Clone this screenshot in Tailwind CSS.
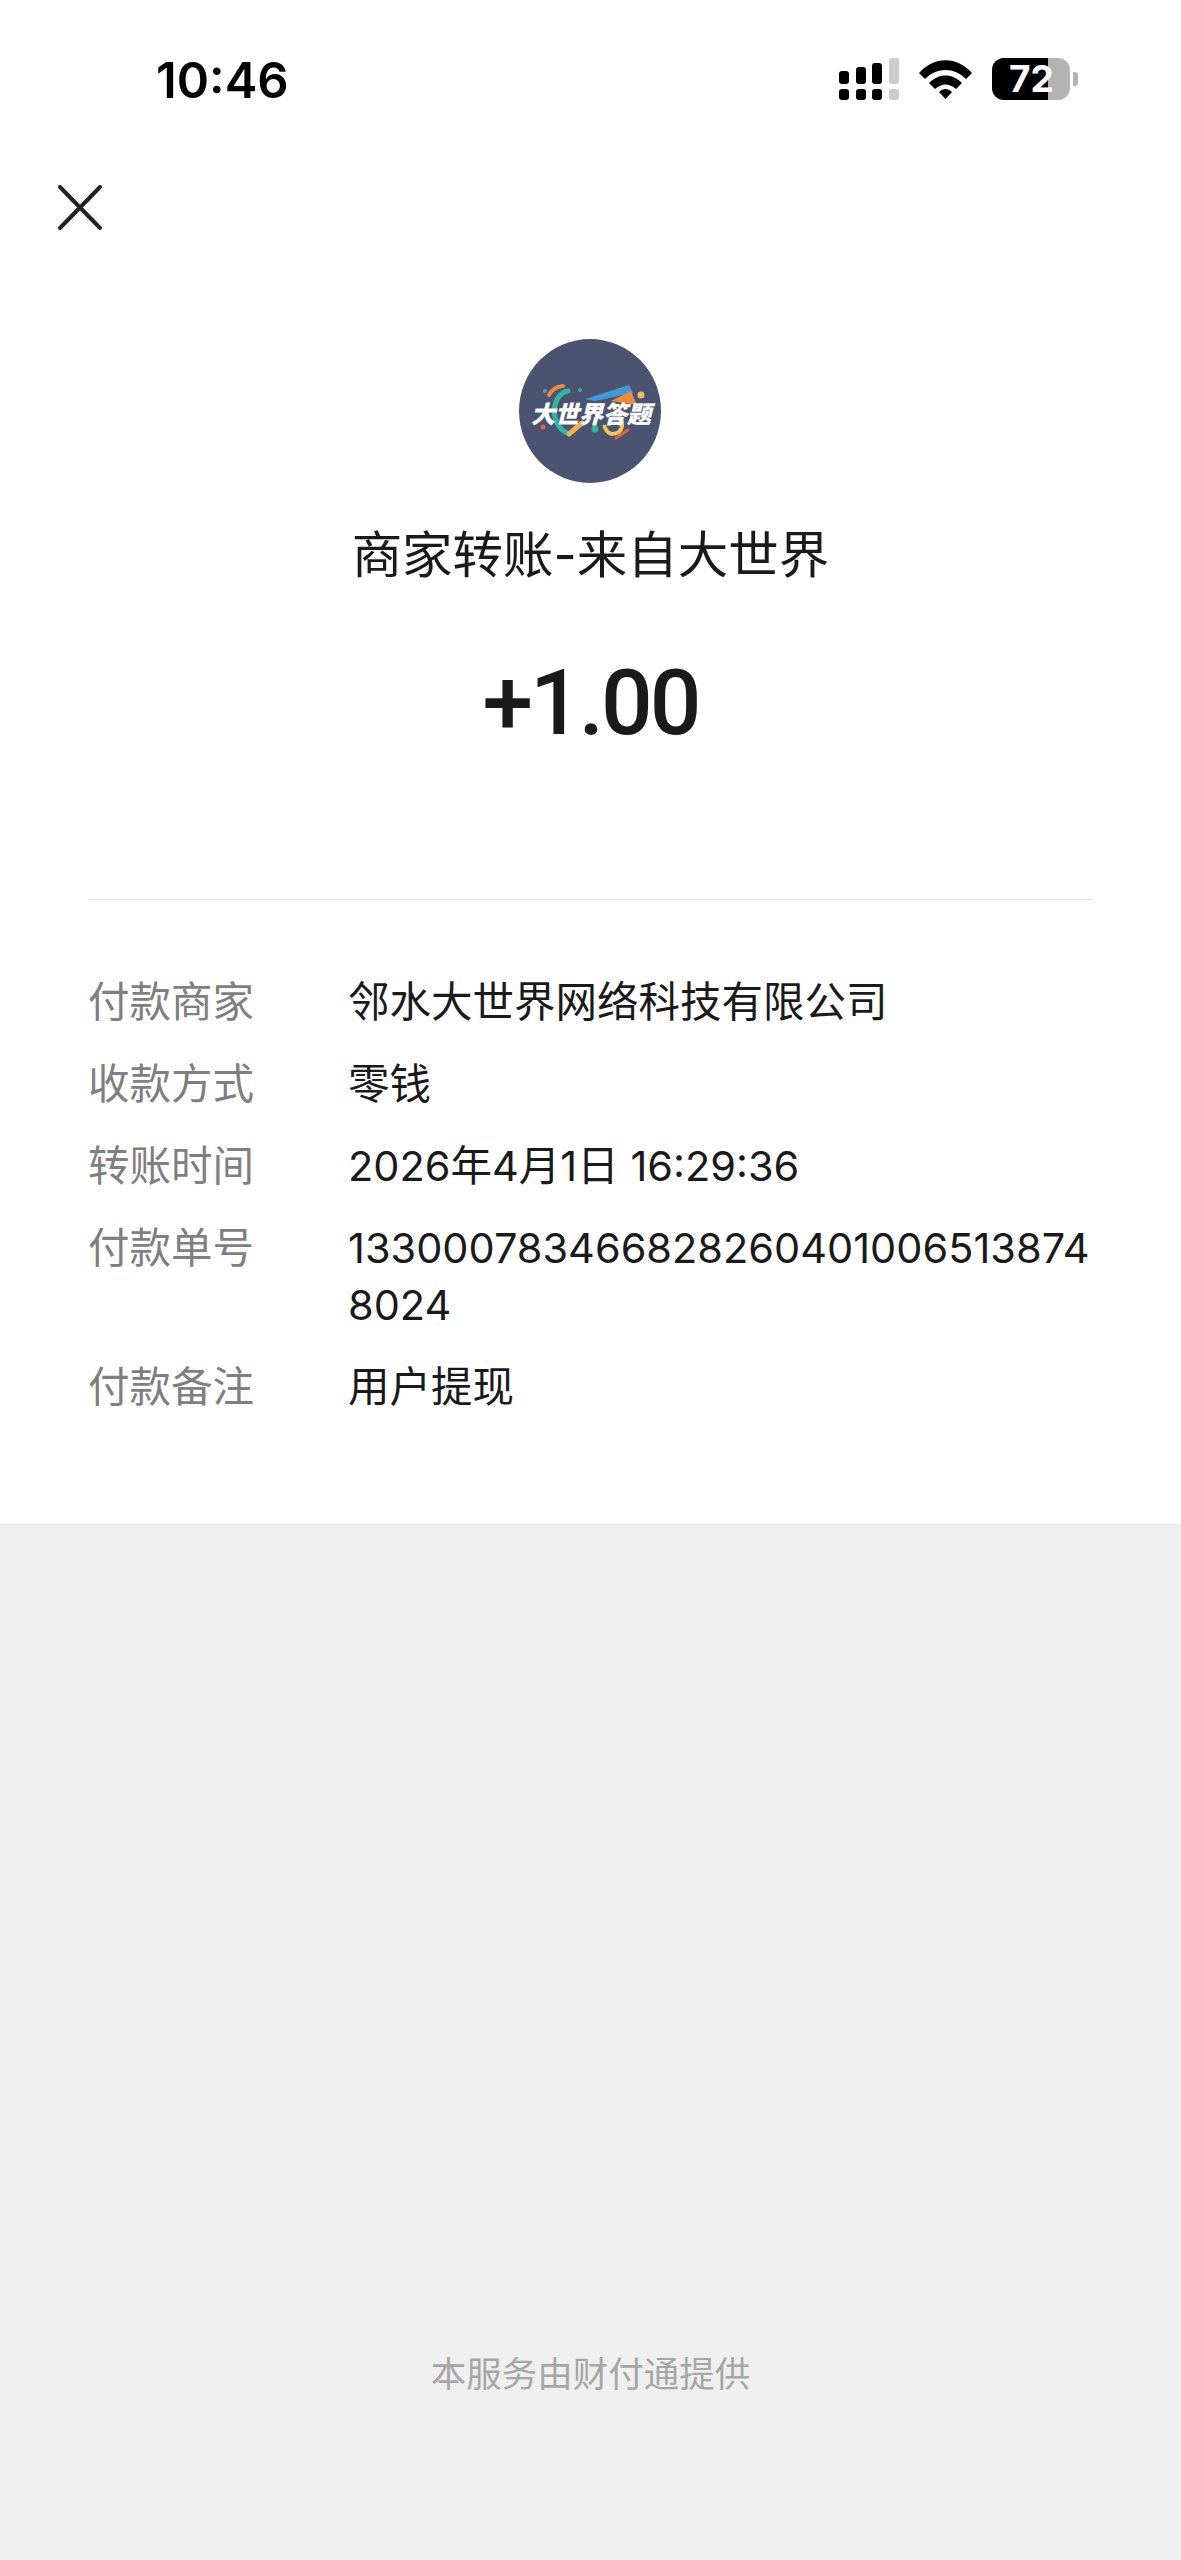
<!DOCTYPE html>
<html lang="zh-CN">

<head>
  <meta charset="UTF-8" />
  <meta name="viewport" content="width=device-width, initial-scale=1" />
  <title>商家转账</title>
  <script src="https://cdn.jsdelivr.net/npm/@tailwindcss/browser@4"></script>
</head>

<body class="bg-[#efefef] font-['Inter','Noto_Sans_CJK_SC',sans-serif] text-[#1a1a1a] w-[1181px] h-[2560px] flex flex-col overflow-hidden">

  <div class="bg-white h-[1525px] shrink-0 border-b border-[#e6e6e6]">
    <!-- status bar -->
    <div class="h-[160px] flex items-start justify-between pl-[156px] pr-[103px] pt-[51px]">
      <span class="text-[49px] leading-[60px] font-semibold text-black">10:46</span>
      <div class="flex items-center gap-[20px] pt-[7px]">
        <svg width="60" height="42" viewBox="0 0 60 42">
          <rect x="0" y="13" width="10" height="13" rx="3" />
          <rect x="17" y="9" width="10" height="17" rx="3" />
          <rect x="33" y="5" width="10" height="21" rx="3" />
          <rect x="50" y="0" width="10" height="26" rx="3" fill="#cccccc" />
          <rect x="0" y="31" width="10" height="11" rx="3" />
          <rect x="17" y="31" width="10" height="11" rx="3" />
          <rect x="33" y="31" width="10" height="11" rx="3" />
          <rect x="50" y="31" width="10" height="11" rx="3" fill="#cccccc" />
        </svg>
        <svg width="53" height="40" viewBox="0 0 53 40">
          <path d="M0 14 C15 -3 38 -3 53 14 L47 20 C35 8 18 8 6 20 Z" />
          <path d="M10 24 C20 14 33 14 43 24 L37 30 C30 24 23 24 16 30 Z" />
          <path d="M20 33 C24 29 29 29 33 33 L26.5 40 Z" />
        </svg>
        <div class="flex items-center gap-[3px]">
          <div class="relative w-[78px] h-[42px] rounded-[12px] bg-[#b3b3b3]">
            <div class="h-full w-[56px] bg-black rounded-l-[12px]"></div>
            <span class="absolute left-[17px] top-[2px] text-[37px] leading-[38px] font-bold text-white">72</span>
          </div>
          <div class="w-[5px] h-[14px] rounded-r-[4px] bg-[#b3b3b3]"></div>
        </div>
      </div>
    </div>

    <!-- close -->
    <div class="h-[179px] pl-[58px] pt-[25px]">
      <svg width="44" height="45" viewBox="0 0 44 45" fill="none" stroke="#222222" stroke-width="4" stroke-linecap="round">
        <path d="M2 2 L42 43 M42 2 L2 43" />
      </svg>
    </div>

    <!-- logo -->
    <div class="flex justify-center pr-px">
      <svg width="142" height="144" viewBox="0 0 142 144" class="block">
        <ellipse cx="71" cy="72" rx="71" ry="72" fill="#4a5470" />
        <path d="M66 60 L110 46 L114 54 L76 62 Z" fill="#3f9bd8" />
        <path d="M92 62 L112 52 L118 66 Z" fill="#ee8a3c" />
        <path d="M49 52 C32 55 30 86 48 94" fill="none" stroke="#2fb7a0" stroke-width="5" stroke-linecap="round" />
        <path d="M30 56 Q34 48 44 47" fill="none" stroke="#ee8a3c" stroke-width="4" stroke-linecap="round" />
        <path d="M50 95 L63 84" fill="none" stroke="#e9b54a" stroke-width="5" stroke-linecap="round" />
        <path d="M85 86 Q89 99 100 93 Q104 89 103 82" fill="none" stroke="#eec35a" stroke-width="4" />
        <path d="M97 99 L109 91" fill="none" stroke="#e8603c" stroke-width="3" stroke-linecap="round" />
        <circle cx="122" cy="56" r="3.5" fill="#e8c15a" />
        <circle cx="61" cy="51" r="2" fill="#2fb7a0" />
        <circle cx="26" cy="52" r="2" fill="#6f8fe0" />
        <circle cx="24" cy="88" r="2.5" fill="#e8604c" />
        <circle cx="76" cy="90" r="3.5" fill="#2fb7a0" />
        <text x="72" y="84" text-anchor="middle" font-size="24" font-weight="900" fill="#ffffff" stroke="#ffffff" stroke-width="0.2" font-style="italic" font-family="Noto Sans CJK SC">大世界答题</text>
      </svg>
    </div>

    <h1 class="mt-[36px] text-center text-[50.5px] leading-[72px] font-normal">商家转账-来自大世界</h1>

    <div class="mt-[52px] text-center font-['Roboto',sans-serif] text-[91px] leading-[120px] font-medium tracking-[-3px]">+1.00</div>

    <!-- details -->
    <div class="mx-[88px] mt-[136px] border-t border-[#e6e6e6] pt-[74px] flex flex-col gap-[25px] text-[41.5px] leading-[57px]">
      <div class="flex">
        <div class="w-[260px] shrink-0 text-[#7f7f7f]">付款商家</div>
        <div class="flex-1">邻水大世界网络科技有限公司</div>
      </div>
      <div class="flex">
        <div class="w-[260px] shrink-0 text-[#7f7f7f]">收款方式</div>
        <div class="flex-1">零钱</div>
      </div>
      <div class="flex">
        <div class="w-[260px] shrink-0 text-[#7f7f7f]">转账时间</div>
        <div class="flex-1">2026年4月1日 16:29:36</div>
      </div>
      <div class="flex">
        <div class="w-[260px] shrink-0 text-[#7f7f7f]">付款单号</div>
        <div class="flex-1 break-all">1330007834668282604010065138748024</div>
      </div>
      <div class="flex">
        <div class="w-[260px] shrink-0 text-[#7f7f7f]">付款备注</div>
        <div class="flex-1">用户提现</div>
      </div>
    </div>
  </div>

  <div class="flex-1 flex flex-col justify-end items-center pb-[159px]">
    <div class="text-[35.5px] leading-[52px] text-[#a6a6a6]">本服务由财付通提供</div>
  </div>

</body>

</html>
